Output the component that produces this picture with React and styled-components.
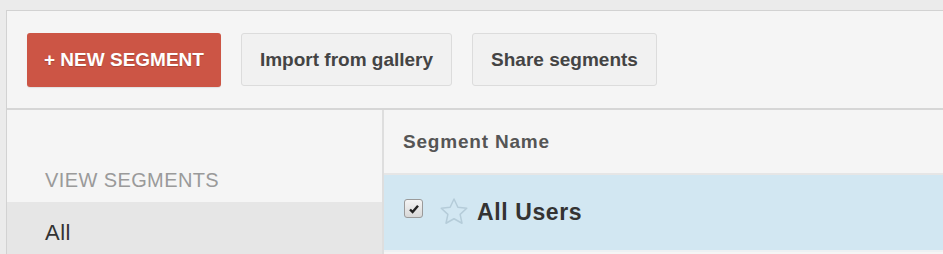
import React from 'react';
import styled, { createGlobalStyle } from 'styled-components';

const GlobalStyle = createGlobalStyle`
  html, body {
    margin: 0;
    padding: 0;
    background: #ebebeb;
    font-family: "Liberation Sans", Arial, Helvetica, sans-serif;
  }
`;

const Page = styled.div`
  width: 943px;
  height: 254px;
  padding: 10px 0 0 6px;
  box-sizing: border-box;
  overflow: hidden;
`;

const Panel = styled.div`
  background: #f5f5f5;
  border: 1px solid #d2d2d2;
  border-right: none;
  height: 300px;
`;

const Toolbar = styled.div`
  display: flex;
  align-items: center;
  gap: 20px;
  height: 97px;
  padding: 0 0 0 20px;
  border-bottom: 2px solid #d6d6d6;
`;

const PrimaryButton = styled.button`
  height: 54px;
  padding: 0 17px;
  border: none;
  border-radius: 3px;
  background: #cc5545;
  color: #fff;
  font-family: inherit;
  font-weight: 700;
  font-size: 19px;
  text-shadow: 0 1px 1px rgba(0, 0, 0, 0.2);
  box-shadow: 0 1px 1px rgba(0, 0, 0, 0.08);
`;

const GhostButton = styled.button`
  height: 53px;
  padding: 0 18px;
  border: 1px solid #dcdcdc;
  border-radius: 3px;
  background: #f1f1f1;
  color: #444;
  font-family: inherit;
  font-weight: 700;
  font-size: 19px;
`;

const Columns = styled.div`
  display: flex;
`;

const Sidebar = styled.div`
  width: 375px;
  flex-shrink: 0;
  border-right: 2px solid #dedede;
  padding-top: 60px;
`;

const SideLabel = styled.div`
  padding-left: 38px;
  height: 32px;
  font-size: 20px;
  line-height: 20px;
  letter-spacing: 0.4px;
  color: #9a9a9a;
  text-transform: uppercase;
`;

const SideItem = styled.div`
  height: 60px;
  padding: 20px 0 0 38px;
  box-sizing: border-box;
  background: ${p => (p.$active ? '#e6e6e6' : 'transparent')};
  font-size: 22px;
  line-height: 22px;
  letter-spacing: 0.5px;
  color: #333;
`;

const Table = styled.div`
  flex: 1;
`;

const HeaderCell = styled.div`
  height: 63px;
  display: flex;
  align-items: center;
  padding-left: 19px;
  border-bottom: 2px solid #e6e6e6;
  font-size: 19px;
  letter-spacing: 0.8px;
  font-weight: 700;
  color: #555;
`;

const Row = styled.div`
  height: 75px;
  display: flex;
  align-items: center;
  padding-left: 20px;
  background: ${p => (p.$selected ? '#d2e7f2' : '#fff')};
  border-bottom: 2px solid #eef1f3;
`;

const Check = styled.span`
  width: 19px;
  height: 19px;
  box-sizing: border-box;
  border: 1px solid #9a9a9a;
  border-radius: 3px;
  background: linear-gradient(#f4f4f4, #d8d8d8);
  display: flex;
  align-items: center;
  justify-content: center;
  margin-right: 16px;
  margin-top: -8px;
`;

const RowName = styled.span`
  margin-left: 8px;
  font-size: 23px;
  letter-spacing: 0.6px;
  font-weight: 700;
  color: #333;
`;

const Star = () => (
  <svg width="30" height="29" viewBox="0 0 24 23" style={{ marginTop: -2 }}>
    <path
      d="M12 1.5l3.1 6.6 7.1.8-5.3 4.9 1.5 7.1L12 17.3l-6.4 3.6 1.5-7.1L1.8 8.9l7.1-.8z"
      fill="none"
      stroke="#b5ccd9"
      strokeWidth="1.2"
      strokeLinejoin="round"
    />
  </svg>
);

const CheckMark = () => (
  <svg width="12" height="12" viewBox="0 0 12 12">
    <path d="M2 6.5l2.6 2.6L10 2.8" fill="none" stroke="#222" strokeWidth="2.4" />
  </svg>
);

export default function App() {
  return (
    <>
      <GlobalStyle />
      <Page>
        <Panel>
          <Toolbar>
            <PrimaryButton>+ NEW SEGMENT</PrimaryButton>
            <GhostButton>Import from gallery</GhostButton>
            <GhostButton>Share segments</GhostButton>
          </Toolbar>
          <Columns>
            <Sidebar>
              <SideLabel>View Segments</SideLabel>
              <SideItem $active>All</SideItem>
            </Sidebar>
            <Table>
              <HeaderCell>Segment Name</HeaderCell>
              <Row $selected>
                <Check><CheckMark /></Check>
                <Star />
                <RowName>All Users</RowName>
              </Row>
            </Table>
          </Columns>
        </Panel>
      </Page>
    </>
  );
}
